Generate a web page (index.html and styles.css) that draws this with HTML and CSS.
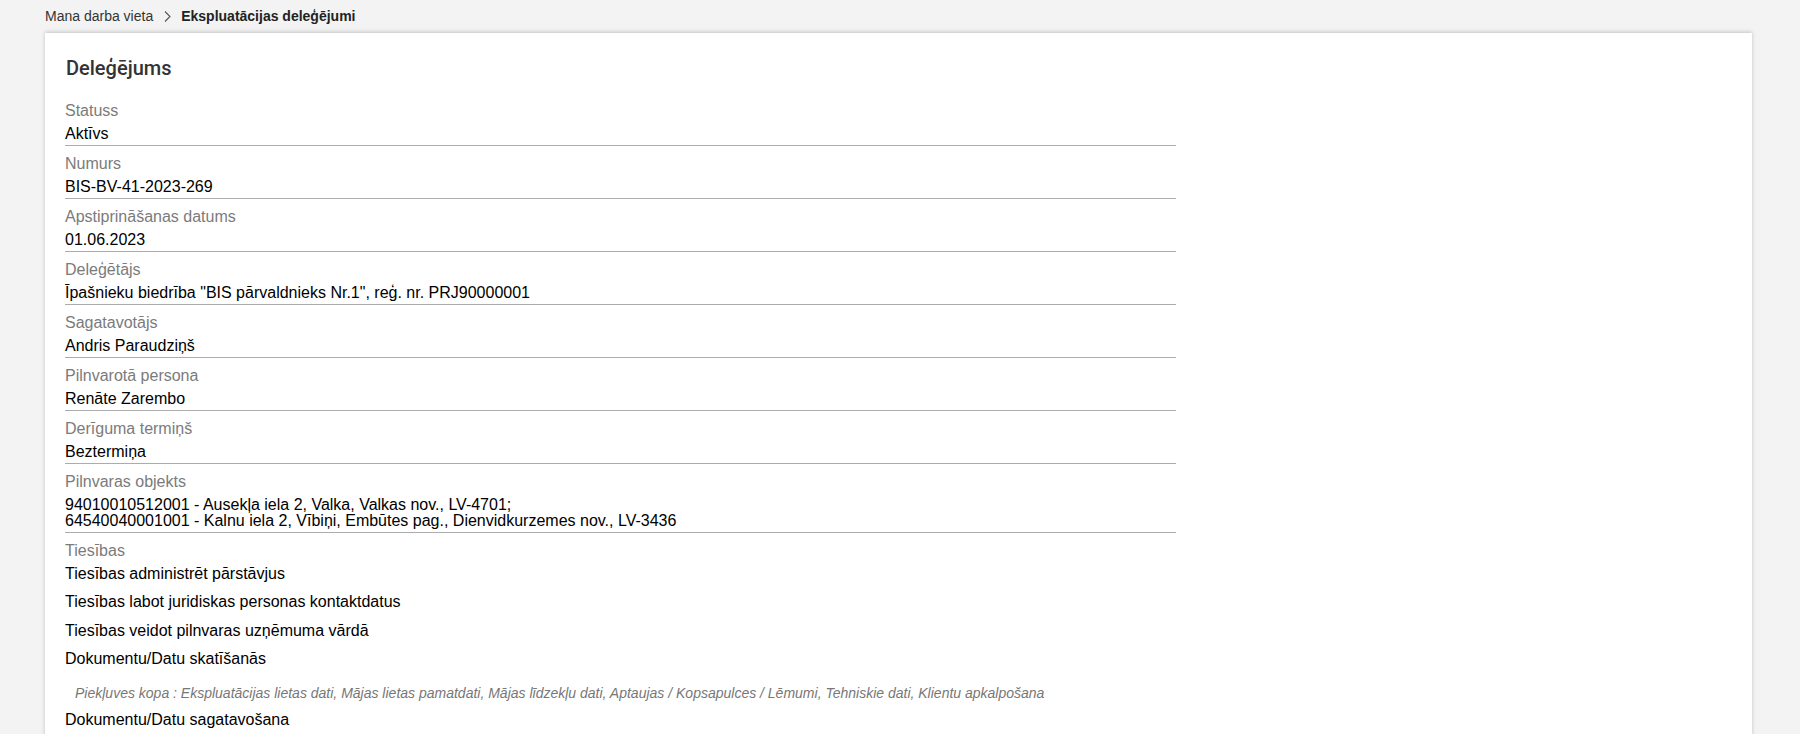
FILE: index.html
```html
<!DOCTYPE html>
<html lang="lv">
<head>
<meta charset="utf-8">
<title>Deleģējums</title>
<link rel="stylesheet" href="styles.css">
</head>
<body>
<nav class="breadcrumb">
  <span class="crumb">Mana darba vieta</span>
  <svg class="chev" width="7" height="11" viewBox="0 0 7 11"><polyline points="1,0.5 6,5.5 1,10.5" fill="none" stroke="#555" stroke-width="1.1"/></svg>
  <span class="crumb current">Ekspluatācijas deleģējumi</span>
</nav>
<main class="card">
  <h1 class="title">Deleģējums</h1>
  <div class="form">
    <div class="field"><div class="label">Statuss</div><div class="value">Aktīvs</div></div>
    <div class="field"><div class="label">Numurs</div><div class="value">BIS-BV-41-2023-269</div></div>
    <div class="field"><div class="label">Apstiprināšanas datums</div><div class="value">01.06.2023</div></div>
    <div class="field"><div class="label">Deleģētājs</div><div class="value">Īpašnieku biedrība "BIS pārvaldnieks Nr.1", reģ. nr. PRJ90000001</div></div>
    <div class="field"><div class="label">Sagatavotājs</div><div class="value">Andris Paraudziņš</div></div>
    <div class="field"><div class="label">Pilnvarotā persona</div><div class="value">Renāte Zarembo</div></div>
    <div class="field"><div class="label">Derīguma termiņš</div><div class="value">Beztermiņa</div></div>
    <div class="field"><div class="label">Pilnvaras objekts</div><div class="value">94010010512001 - Ausekļa iela 2, Valka, Valkas nov., LV-4701;<br>64540040001001 - Kalnu iela 2, Vībiņi, Embūtes pag., Dienvidkurzemes nov., LV-3436</div></div>
    <div class="field plain">
      <div class="label">Tiesības</div>
      <ul class="rights">
        <li>Tiesības administrēt pārstāvjus</li>
        <li>Tiesības labot juridiskas personas kontaktdatus</li>
        <li>Tiesības veidot pilnvaras uzņēmuma vārdā</li>
        <li class="with-note">Dokumentu/Datu skatīšanās
          <div class="note">Piekļuves kopa : Ekspluatācijas lietas dati, Mājas lietas pamatdati, Mājas līdzekļu dati, Aptaujas / Kopsapulces / Lēmumi, Tehniskie dati, Klientu apkalpošana</div>
        </li>
        <li>Dokumentu/Datu sagatavošana</li>
      </ul>
    </div>
  </div>
</main>
</body>
</html>
```
FILE: styles.css
```css
html, body {
  margin: 0;
  padding: 0;
  height: 100%;
  overflow: hidden;
}
body {
  background: #f3f3f3;
  font-family: "Liberation Sans", Arial, sans-serif;
  color: #000;
}
.breadcrumb {
  display: flex;
  align-items: center;
  padding: 6px 0 0 45px;
  height: 20px;
  margin-bottom: 7px;
  font-size: 14px;
  line-height: 20px;
  color: #333;
}
.chev {
  margin: 0 10px 0 11px;
}
.crumb.current {
  font-weight: bold;
  color: #222;
}
.card {
  margin: 0 48px 0 45px;
  background: #fff;
  box-shadow: 0 -1px 4px rgba(0,0,0,0.2);
  padding: 23px 20px 40px;
  min-height: 800px;
}
.title {
  margin: 0 0 12.5px 1px;
  font-family: Roboto, "Liberation Sans", sans-serif;
  font-weight: 500;
  font-size: 20px;
  line-height: 24px;
  color: #333;
}
.form {
  width: 66.66%;
}
.field {
  padding-top: 7px;
  border-bottom: 1px solid #acacac;
}
.field.plain {
  border-bottom: none;
}
.label {
  font-size: 16px;
  line-height: 21px;
  color: #7b7b7b;
}
.value {
  font-size: 16px;
  line-height: 16px;
  padding: 5px 0 3px;
  color: #000;
}
.rights {
  list-style: none;
  margin: 0;
  padding: 0;
}
.rights li {
  font-size: 16px;
  line-height: 18px;
  padding: 4px 0 6.5px;
}
.rights li.with-note {
  padding-bottom: 6.5px;
}
.note {
  margin: 16.5px 0 0 10px;
  font-size: 14px;
  line-height: 16px;
  font-style: italic;
  color: #777;
}
```
